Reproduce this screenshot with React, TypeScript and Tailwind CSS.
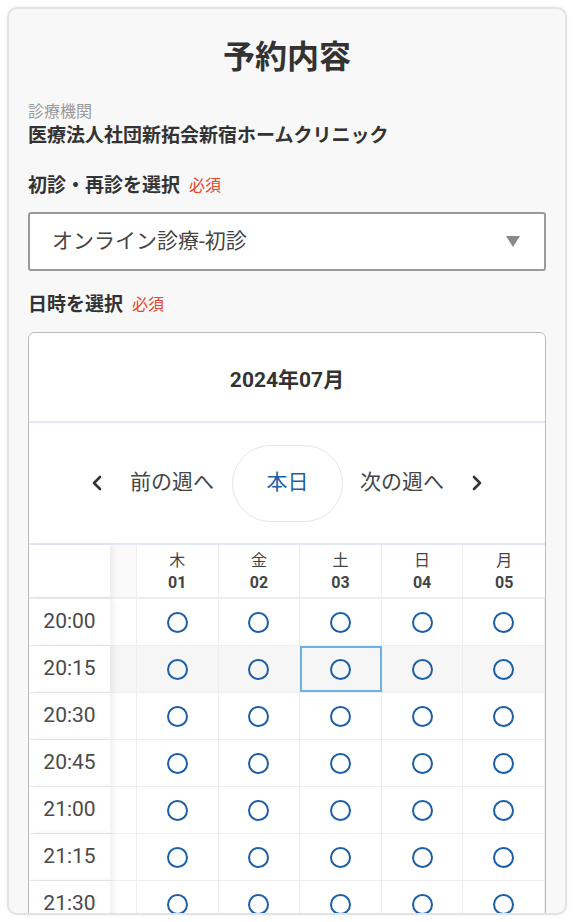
const font = { fontFamily: "Roboto, 'Noto Sans CJK JP', sans-serif" };

const days = [
  { w: "木", d: "01" },
  { w: "金", d: "02" },
  { w: "土", d: "03" },
  { w: "日", d: "04" },
  { w: "月", d: "05" },
];

const times = ["20:00", "20:15", "20:30", "20:45", "21:00", "21:15", "21:30"];

function Chevron({ dir }: { dir: "left" | "right" }) {
  return (
    <svg width="12" height="18" viewBox="0 0 12 18" className="text-[#333]">
      {dir === "left" ? (
        <polyline points="9,3 3,9 9,15" fill="none" stroke="currentColor" strokeWidth="2.6" strokeLinecap="round" strokeLinejoin="round" />
      ) : (
        <polyline points="3,3 9,9 3,15" fill="none" stroke="currentColor" strokeWidth="2.6" strokeLinecap="round" strokeLinejoin="round" />
      )}
    </svg>
  );
}

function Slot({ active }: { active?: boolean }) {
  return (
    <div
      className={
        active
          ? "flex items-center justify-center border-2 border-[#6cb0ea]"
          : "flex items-center justify-center border-r border-[#eeeeee]"
      }
    >
      <div className="h-[21px] w-[21px] rounded-full border-2 border-[#1d5fa7]" />
    </div>
  );
}

export default function App() {
  return (
    <div className="bg-white p-[7px]" style={font}>
      <div className="h-[908px] overflow-hidden rounded-[10px] border-2 border-[#e0e3e8] bg-[#f8f8f8] px-[19px] pt-[24px] shadow-[0_0_4px_rgba(0,0,0,0.06)]">
        <h1 className="text-center text-[32px] leading-[48px] font-bold text-[#333]">予約内容</h1>

        <p className="mt-[19px] text-[16px] leading-[24px] text-[#9a9a9a]">診療機関</p>
        <p className="text-[19px] leading-[24px] font-bold text-[#333]">医療法人社団新拓会新宿ホームクリニック</p>

        <div className="mt-[24px] flex items-center gap-[9px] leading-[28px]">
          <span className="text-[19px] font-bold text-[#333]">初診・再診を選択</span>
          <span className="text-[16px] text-[#e8452c]">必須</span>
        </div>

        <div className="mt-[12px] flex h-[59px] items-center justify-between rounded-[3px] border-2 border-[#9a9a9a] bg-white pr-[24px] pl-[22px]">
          <span className="text-[21px] text-[#444]">オンライン診療-初診</span>
          <svg width="14" height="11" viewBox="0 0 14 11">
            <polygon points="0,0 14,0 7,11" fill="#8a8a8a" />
          </svg>
        </div>

        <div className="mt-[20px] flex items-center gap-[9px] leading-[28px]">
          <span className="text-[19px] font-bold text-[#333]">日時を選択</span>
          <span className="text-[16px] text-[#e8452c]">必須</span>
        </div>

        <div className="mt-[13px] overflow-hidden rounded-[6px] border border-[#bbbbbb] bg-white">
          <div className="flex h-[88px] items-center justify-center pt-[8px] text-[21px] font-bold text-[#333]">
            2024年07月
          </div>
          <div className="flex h-[124px] items-center justify-center border-y-2 border-[#e3e9f0] text-[21px] text-[#444]">
            <Chevron dir="left" />
            <span className="ml-[27px]">前の週へ</span>
            <button className="ml-[18px] flex h-[77px] w-[111px] items-center justify-center rounded-full border border-[#e0e6ee] bg-white text-[21px] text-[#1d5fa7]">
              本日
            </button>
            <span className="mr-[27px] ml-[17px]">次の週へ</span>
            <Chevron dir="right" />
          </div>

          <div className="grid h-[54px] grid-cols-[81px_27px_repeat(5,1fr)] border-b-2 border-[#eeeeee]">
            <div className="relative z-10 bg-white shadow-[4px_0_6px_rgba(0,0,0,0.06)]" />
            <div className="border-r border-[#eeeeee] bg-[#fafafa]" />
            {days.map((d) => (
              <div key={d.d} className="flex flex-col items-center justify-center border-r border-[#eeeeee] pt-[2px] text-[16px] leading-[22px] text-[#444] last:border-r-0">
                <span>{d.w}</span>
                <span className="font-bold">{d.d}</span>
              </div>
            ))}
          </div>

          {times.map((t) => {
            const hover = t === "20:15";
            return (
              <div
                key={t}
                className={
                  hover
                    ? "grid h-[47px] grid-cols-[81px_27px_repeat(5,1fr)] border-b border-[#eeeeee] bg-[#f6f6f6]"
                    : "grid h-[47px] grid-cols-[81px_27px_repeat(5,1fr)] border-b border-[#eeeeee]"
                }
              >
                <div className="relative z-10 flex items-center justify-center bg-white text-[21px] text-[#4a4a4a] shadow-[4px_0_6px_rgba(0,0,0,0.06)]">
                  {t}
                </div>
                <div className="border-r border-[#eeeeee]" />
                {days.map((d) => (
                  <Slot key={d.d} active={hover && d.d === "03"} />
                ))}
              </div>
            );
          })}
        </div>
      </div>
    </div>
  );
}
